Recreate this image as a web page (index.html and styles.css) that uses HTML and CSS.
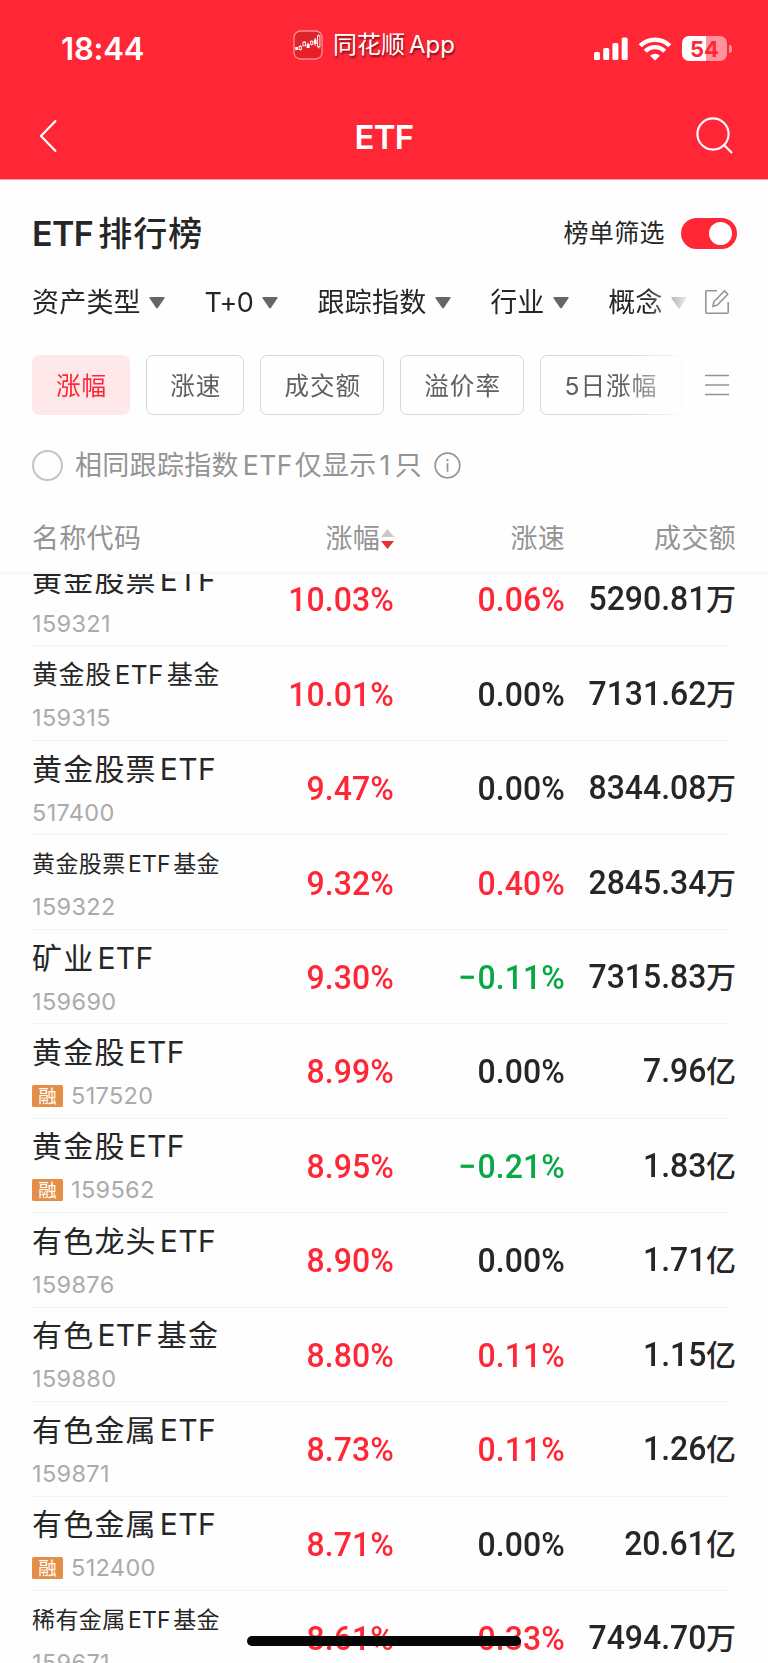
FILE: index.html
```html
<!DOCTYPE html>
<html lang="zh-CN">
<head>
<meta charset="utf-8">
<title>ETF排行榜</title>
<link rel="stylesheet" href="styles.css">
</head>
<body>
<div class="screen">
  <header class="top">
    <div class="status">
      <div class="clock">18:44</div>
      <div class="app">
        <svg class="app-icon" width="30" height="30" viewBox="0 0 30 30"><defs><linearGradient id="ig" x1="0" y1="0" x2="0" y2="1"><stop offset="0" stop-color="#d8262c"/><stop offset="1" stop-color="#ea1f24"/></linearGradient></defs><rect x="1" y="1" width="28" height="28" rx="6.5" fill="url(#ig)" stroke="#ff8f95" stroke-width="1.3"/><g fill="#fff"><rect x="2.2" y="17" width="3" height="3"/><rect x="13.6" y="14" width="3" height="4"/><rect x="20.8" y="9.6" width="2.8" height="4.4"/></g><g fill="none" stroke="#fff" stroke-width=".9"><path d="M7.3 15v5.500M11.200 11.200v1M15 12.500v1.500M18.700 10.500v5M22.200 8v8M25.700 4.500v14"/><rect x="6.200" y="16.500" width="2.200" height="3" fill="#e02227"/><rect x="10" y="12.200" width="2.400" height="3.600"/><rect x="17.600" y="11.300" width="2.200" height="3" fill="#e02227"/><rect x="24.500" y="5.800" width="2.400" height="11" fill="#e02227"/></g></svg>
        <span class="app-name">同花顺<i>App</i></span>
      </div>
      <div class="indicators">
        <svg width="34" height="24" viewBox="0 0 34 24" fill="#fff"><rect x="0" y="15" width="6" height="8" rx="1.600"/><rect x="9.200" y="11" width="6" height="12" rx="1.600"/><rect x="18.400" y="6" width="6" height="17" rx="1.600"/><rect x="27.700" y="0.500" width="6" height="22.500" rx="1.600"/></svg>
        <svg class="wifi" width="34" height="24" viewBox="0 0 34 24"><g fill="none" stroke="#fff" stroke-width="4.400"><path d="M2.200 8.800a21 21 0 0 1 29.600 0"/><path d="M7.300 14.200a13.600 13.600 0 0 1 19.400 0"/></g><path d="M17 23.500l-4.900-4.800a7 7 0 0 1 9.800 0z" fill="#fff"/></svg>
        <div class="battery"><span class="level"><span>5</span><span>4</span></span><i class="nub"></i></div>
      </div>
    </div>
    <nav class="nav">
      <svg width="20" height="34" viewBox="0 0 20 34"><path d="M18 1.500L3 17l15 15.500" fill="none" stroke="#fff" stroke-width="2.200"/></svg>
      <h1>ETF</h1>
      <svg width="38" height="38" viewBox="0 0 38 38" fill="none" stroke="#fff" stroke-width="2.100"><circle cx="17" cy="17" r="15.600"/><path d="M27.500 27.500l8.500 8.500"/></svg>
    </nav>
  </header>

  <section class="title">
    <h2><i>ETF</i>排行榜</h2>
    <div class="switcher"><span>榜单筛选</span><div class="toggle"><i></i></div></div>
  </section>

  <section class="filters">
    <div class="filter-items">
      <div class="f"><span>资产类型</span><svg width="16" height="12"><path d="M1.500 0h13q2 0 .8 1.500L9 10.800q-1 1.200-2 0L.7 1.500Q-.5 0 1.500 0z"/></svg></div>
      <div class="f t0"><span>T+0</span><svg width="16" height="12"><path d="M1.500 0h13q2 0 .8 1.500L9 10.800q-1 1.200-2 0L.7 1.500Q-.5 0 1.500 0z"/></svg></div>
      <div class="f"><span>跟踪指数</span><svg width="16" height="12"><path d="M1.500 0h13q2 0 .8 1.500L9 10.800q-1 1.200-2 0L.7 1.500Q-.5 0 1.500 0z"/></svg></div>
      <div class="f"><span>行业</span><svg width="16" height="12"><path d="M1.500 0h13q2 0 .8 1.500L9 10.800q-1 1.200-2 0L.7 1.500Q-.5 0 1.500 0z"/></svg></div>
      <div class="f"><span>概念</span><svg width="16" height="12"><path d="M1.500 0h13q2 0 .8 1.500L9 10.800q-1 1.200-2 0L.7 1.500Q-.5 0 1.500 0z"/></svg></div>
    </div>
    <svg class="edit" width="26" height="26" viewBox="0 0 26 26" fill="none" stroke="#949494" stroke-width="1.600"><path d="M13 1.800H2.800q-1 0-1 1v20.400q0 1 1 1h20.400q1 0 1-1V13"/><path d="M9 17.400l.8-4.600L20.500 2l3.200 3.200L13.200 16z"/></svg>
  </section>

  <section class="pills">
    <div class="pill-items">
      <div class="pill on">涨幅</div><div class="pill">涨速</div><div class="pill">成交额</div><div class="pill">溢价率</div><div class="pill wide">5日涨幅</div>
    </div>
    <svg width="24" height="24" viewBox="0 0 24 24" stroke="#949494" stroke-width="1.700"><path d="M0 2.500h24M0 12h24M0 21.500h24"/></svg>
  </section>

  <section class="only">
    <span class="radio"></span>
    <span class="only-text">相同跟踪指数<i>ETF</i>仅显示<i class="one">1</i>只</span>
    <svg width="27" height="27" viewBox="0 0 27 27" fill="none" stroke="#949494" stroke-width="1.700"><circle cx="13.500" cy="13.500" r="12.300"/><path d="M13.500 11.200v8.600M13.500 7v2.200"/></svg>
  </section>

  <div class="cols head">
    <span class="h0">名称代码</span>
    <span class="h1">涨幅<svg width="13" height="20" viewBox="0 0 13 20"><path d="M0 8l6.500-8L13 8z" fill="#c8c8c8"/><path d="M0 12l6.500 8L13 12z" fill="#e93030"/></svg></span>
    <span class="h2">涨速</span>
    <span class="h3">成交额</span>
  </div>

  <main class="list">
    <div class="rows">
      <div class="cols row"><div class="nm"><b>黄金股票<i>ETF</i></b><small>159321</small></div><span class="n r">10.03%</span><span class="n r">0.06%</span><span class="a"><span class="n">5290.81</span>万</span></div>
      <div class="cols row"><div class="nm"><b class="m">黄金股<i>ETF</i>基金</b><small>159315</small></div><span class="n r">10.01%</span><span class="n">0.00%</span><span class="a"><span class="n">7131.62</span>万</span></div>
      <div class="cols row"><div class="nm"><b>黄金股票<i>ETF</i></b><small>517400</small></div><span class="n r">9.47%</span><span class="n">0.00%</span><span class="a"><span class="n">8344.08</span>万</span></div>
      <div class="cols row"><div class="nm"><b class="s">黄金股票<i>ETF</i>基金</b><small>159322</small></div><span class="n r">9.32%</span><span class="n r">0.40%</span><span class="a"><span class="n">2845.34</span>万</span></div>
      <div class="cols row"><div class="nm"><b>矿业<i>ETF</i></b><small>159690</small></div><span class="n r">9.30%</span><span class="n d"><i class="minus">−</i>0.11%</span><span class="a"><span class="n">7315.83</span>万</span></div>
      <div class="cols row"><div class="nm"><b>黄金股<i>ETF</i></b><small><em>融</em>517520</small></div><span class="n r">8.99%</span><span class="n">0.00%</span><span class="a"><span class="n">7.96</span>亿</span></div>
      <div class="cols row"><div class="nm"><b>黄金股<i>ETF</i></b><small><em>融</em>159562</small></div><span class="n r">8.95%</span><span class="n d"><i class="minus">−</i>0.21%</span><span class="a"><span class="n">1.83</span>亿</span></div>
      <div class="cols row"><div class="nm"><b>有色龙头<i>ETF</i></b><small>159876</small></div><span class="n r">8.90%</span><span class="n">0.00%</span><span class="a"><span class="n">1.71</span>亿</span></div>
      <div class="cols row"><div class="nm"><b>有色<i>ETF</i>基金</b><small>159880</small></div><span class="n r">8.80%</span><span class="n r">0.11%</span><span class="a"><span class="n">1.15</span>亿</span></div>
      <div class="cols row"><div class="nm"><b>有色金属<i>ETF</i></b><small>159871</small></div><span class="n r">8.73%</span><span class="n r">0.11%</span><span class="a"><span class="n">1.26</span>亿</span></div>
      <div class="cols row"><div class="nm"><b>有色金属<i>ETF</i></b><small><em>融</em>512400</small></div><span class="n r">8.71%</span><span class="n">0.00%</span><span class="a"><span class="n">20.61</span>亿</span></div>
      <div class="cols row"><div class="nm"><b class="s">稀有金属<i>ETF</i>基金</b><small>159671</small></div><span class="n r">8.61%</span><span class="n r">0.33%</span><span class="a"><span class="n">7494.70</span>万</span></div>
    </div>
  </main>
  <div class="home-bar"></div>
</div>
</body>
</html>
```

FILE: styles.css
```css
* { box-sizing: border-box; margin: 0; padding: 0; }
body {
  background: #fefefe;
  color: #262626;
  font-family: Inter, "Noto Sans CJK SC", sans-serif;
  text-autospace: no-autospace;
}
i, em { font-style: normal; }
svg { display: block; flex: none; }
.screen { position: relative; width: 768px; height: 1663px; overflow: hidden; display: flex; flex-direction: column; }
.screen > * { flex: none; }

/* red header */
.top { height: 180px; background: #ff2636; border-bottom: 1px solid #ff9ca3; color: #fff; }
.status { height: 98px; display: grid; grid-template-columns: 293px 1fr auto; padding-right: 36px; }
.clock { padding: 30px 0 0 61px; font-size: 31px; line-height: 38px; font-weight: 600; letter-spacing: -.2px; }
.app { display: flex; align-items: center; height: 30px; margin-top: 29.500px; gap: 10px; }
.app-name { font-size: 24px; line-height: 30px; padding-top: 1px; letter-spacing: 0; text-shadow: 1px 2px 2px rgba(60,0,0,.65); white-space: nowrap; }
.app-name i { margin-left: 4px; }
.indicators { display: flex; align-items: flex-start; padding-top: 37px; }
.wifi { margin-left: 10px; }
.battery { display: flex; align-items: center; margin: -1px 0 0 10px; gap: 2px; }
.level { width: 45px; height: 25px; border-radius: 7px; background: linear-gradient(90deg, #fff 54%, #ff929b 54%); color: #ff2636; display: flex; justify-content: center; font-size: 22px; line-height: 26px; font-weight: 700; }
.nub { width: 3px; height: 8px; border-radius: 0 4px 4px 0; background: #ff929b; }
.nav { height: 76px; display: flex; align-items: center; justify-content: space-between; padding: 0 34px 0 38px; }
.nav h1 { font-size: 33px; line-height: 40px; padding-top: 2px; font-weight: 600; letter-spacing: -.8px; margin-left: 14px; }

/* title row */
.title { height: 106px; display: flex; align-items: center; justify-content: space-between; padding: 0 31px 0 32px; }
.title h2 { font-size: 34px; line-height: 40px; font-weight: 500; letter-spacing: 1px; padding-top: 1px; }
.title h2 i { font-weight: 600; letter-spacing: -.6px; margin: 0 5px 0 0; }
.switcher { display: flex; align-items: center; gap: 16px; font-size: 25px; line-height: 30px; letter-spacing: .4px; }
.toggle { width: 56px; height: 31px; border-radius: 16px; background: #ff2636; padding: 4px 5px; display: flex; justify-content: flex-end; }
.toggle i { width: 23px; height: 23px; border-radius: 50%; background: #fff; }

/* filters */
.filters { height: 32px; display: flex; align-items: center; padding: 0 38px 0 32px; justify-content: space-between; }
.filter-items { width: 655px; display: flex; gap: 39.300px; mask-image: linear-gradient(90deg, #000 615px, transparent 660px); }
.f { display: flex; align-items: center; gap: 8.500px; font-size: 27px; line-height: 32px; white-space: nowrap; letter-spacing: .2px; }
.f span { padding-top: 1px; margin-bottom: -1px; }
.f svg { fill: #666; margin-top: 1px; }
.t0 { letter-spacing: -.6px; }
.t0 svg { margin-left: .6px; }

/* sort pills */
.pills { height: 60px; margin-top: 36.500px; display: flex; align-items: center; justify-content: space-between; padding: 0 39px 0 32px; }
.pill-items { display: flex; gap: 16px; mask-image: linear-gradient(90deg, #000 590px, rgba(0,0,0,.2) 648px); }
.pill { height: 60px; padding: 0 22px 0 23px; border: 1.500px solid #d6d6d6; border-radius: 7px; color: #606060; font-size: 24.600px; line-height: 60px; letter-spacing: 1px; white-space: nowrap; }
.pill.wide { padding: 0 23.500px; }
.pill.on { color: #ff2636; background: #ffe8ea; border-color: #ffe8ea; }

/* same-index option */
.only { height: 32px; margin-top: 34.500px; display: flex; align-items: center; padding-left: 32px; color: #949494; }
.radio { width: 31px; height: 31px; border: 2px solid #c4c4c4; border-radius: 50%; margin-right: 12px; }
.only-text { font-size: 27px; line-height: 32px; letter-spacing: .3px; margin-right: 12px; white-space: nowrap; padding-top: 1px; }
.only-text i { margin: 0 2px 0 4px; font-size: 26.500px; letter-spacing: .4px; }
.only-text .one { margin: 0 4px 0 3px; }

/* table */
.cols { display: grid; grid-template-columns: 211px 151px 171px 171px; padding-left: 32px; align-items: center; }
.head { height: 93px; padding-top: 24px; border-bottom: 2px solid #f7f7f7; color: #949494; font-size: 27px; line-height: 32px; letter-spacing: .3px; }
.h1, .h2, .h3 { text-align: right; }
.h1 { display: flex; justify-content: flex-end; align-items: center; gap: 1px; }
.list { height: 1089px; overflow: hidden; }
.rows { margin-top: -22px; }
.row { height: 94.460px; position: relative; }
.row::after { content: ""; position: absolute; left: 32px; right: 39px; bottom: 0; height: 1px; background: #f3f3f3; }
.nm { white-space: nowrap; }
.nm b { display: block; height: 40px; line-height: 38px; font-weight: 400; font-size: 30px; letter-spacing: 1.200px; }
.nm b i { letter-spacing: .4px; margin: 0 3px; }
.nm b.m { font-size: 26px; line-height: 40px; letter-spacing: .6px; }
.nm b.s { font-size: 23px; line-height: 40px; letter-spacing: .4px; }
.nm .s i { margin: 0 2.500px; letter-spacing: .1px; }
.nm small { display: flex; align-items: center; height: 28px; margin-top: 9px; font-size: 23.500px; line-height: 28px; color: #ababab; letter-spacing: .35px; }
.nm em { width: 31px; height: 22px; margin-right: 8px; border-radius: 1.500px; background: #e58e47; color: #fff; font-size: 18.500px; line-height: 22px; text-align: center; letter-spacing: 0; }
.n { font-family: Roboto, sans-serif; font-weight: 500; font-size: 34px; line-height: 40px; text-align: right; letter-spacing: .1px; transform: scaleX(.94); transform-origin: right; }
.minus { margin-right: 1.500px; }
.a .n { letter-spacing: 0; margin-top: -2px; }
.r { color: #ff2636; }
.d { color: #08a845; }
.a { display: flex; justify-content: flex-end; align-items: center; font-size: 30px; line-height: 40px; font-weight: 500; white-space: nowrap; }

.home-bar { position: absolute; left: 247px; top: 1636px; width: 274px; height: 10px; border-radius: 5px; background: #070707; }
```
